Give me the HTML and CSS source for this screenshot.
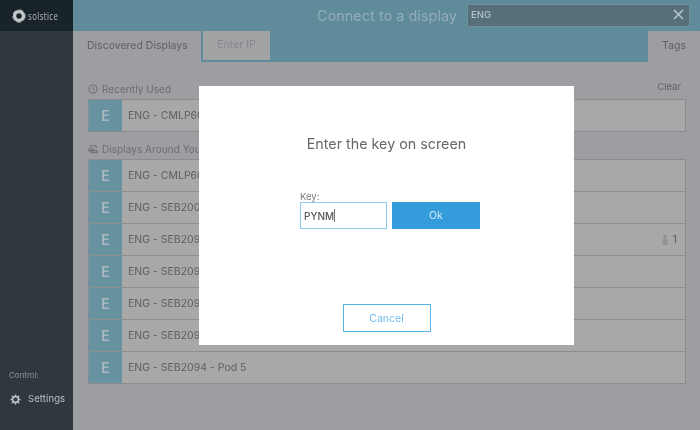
FILE: index.html
```html
<!DOCTYPE html>
<html lang="en">
<head>
<meta charset="utf-8">
<title>Solstice</title>
<link rel="stylesheet" href="styles.css">
</head>
<body>
<div class="app">
  <aside class="sidebar">
    <div class="brand">
      <svg class="brand-icon" width="14" height="14" viewBox="0 0 14 14"><circle cx="7" cy="7" r="4.400" fill="none" stroke="#c4c8c9" stroke-width="3.300"/><circle cx="7" cy="7" r="6.200" fill="none" stroke="#c4c8c9" stroke-width=".8" stroke-dasharray="5 2"/></svg>
      <span class="brand-name">solstice</span>
    </div>
    <div class="side-foot">
      <div class="control-label">Control:</div>
      <div class="settings">
        <svg width="11" height="11" viewBox="0 0 12 12"><circle cx="6" cy="6" r="3.200" fill="none" stroke="#b8bfc4" stroke-width="1.800"/><path d="M6 .5v2M6 9.500v2M.5 6h2M9.500 6h2M2.100 2.100l1.400 1.400M8.500 8.500l1.400 1.400M2.100 9.900l1.400-1.400M8.500 3.500l1.400-1.400" stroke="#b8bfc4" stroke-width="1.700"/></svg>
        <span>Settings</span>
      </div>
    </div>
  </aside>
  <main class="main">
    <header class="topbar">
      <div class="title-row">
        <h1 class="title">Connect to a display</h1>
        <div class="search"><span>ENG</span>
          <svg width="11" height="11" viewBox="0 0 11 11"><path d="M1 1l9 9M10 1l-9 9" stroke="#b4c2c8" stroke-width="1.700"/></svg>
        </div>
      </div>
      <div class="tabs">
        <div class="tab tab-active">Discovered Displays</div>
        <div class="tab tab-off">Enter IP</div>
        <div class="tab tab-tags">Tags</div>
      </div>
    </header>
    <section class="content">
      <div class="section-head head-recent">
        <svg width="10" height="10" viewBox="0 0 11 11"><circle cx="5.500" cy="5.500" r="4.500" fill="none" stroke="#66686b"/><path d="M5.500 2.800v2.900l2 .8" fill="none" stroke="#66686b"/></svg>
        <span class="head-text">Recently Used</span>
        <span class="clear">Clear</span>
      </div>
      <div class="list">
        <div class="row"><div class="badge">E</div><div class="name">ENG - CMLP6000</div></div>
      </div>
      <div class="section-head head-around">
        <svg width="10" height="10" viewBox="0 0 11 11"><path d="M2.500 4.500V2h6.500v2.500M.5 5.500h6v2h-6zM3 7.500h7.500v2H3z" fill="none" stroke="#66686b"/></svg>
        <span class="head-text">Displays Around You</span>
      </div>
      <div class="list">
        <div class="row"><div class="badge">E</div><div class="name">ENG - CMLP6000</div></div>
        <div class="row"><div class="badge">E</div><div class="name">ENG - SEB2000</div></div>
        <div class="row"><div class="badge">E</div><div class="name">ENG - SEB2094 - Pod 1</div>
          <div class="users"><svg width="8" height="11" viewBox="0 0 8 11"><circle cx="4" cy="2.200" r="2" fill="#929292"/><path d="M1.500 11V6.500Q1.500 4.500 4 4.500T6.500 6.500V11z" fill="#929292"/></svg><span>1</span></div>
        </div>
        <div class="row"><div class="badge">E</div><div class="name">ENG - SEB2094 - Pod 2</div></div>
        <div class="row"><div class="badge">E</div><div class="name">ENG - SEB2094 - Pod 3</div></div>
        <div class="row"><div class="badge">E</div><div class="name">ENG - SEB2094 - Pod 4</div></div>
        <div class="row"><div class="badge">E</div><div class="name">ENG - SEB2094 - Pod 5</div></div>
      </div>
    </section>
  </main>
  <div class="modal">
    <h2 class="modal-title">Enter the key on screen</h2>
    <div class="key-form">
      <div class="key-field">
        <label class="key-label" for="key">Key:</label>
        <div class="key-input" id="key">PYNM<i class="caret"></i></div>
      </div>
      <div class="ok">Ok</div>
    </div>
    <div class="cancel">Cancel</div>
  </div>
</div>
</body>
</html>
```
FILE: styles.css
```css
* { box-sizing: border-box; }
html, body { margin: 0; height: 100%; }
body { font-family: Inter, "Liberation Sans", sans-serif; overflow: hidden; }
.app { position: relative; display: flex; width: 700px; height: 430px; background: #9d9ea1; filter: blur(0.45px); }

.sidebar { width: 73px; flex: none; background: #30383f; display: flex; flex-direction: column; justify-content: space-between; }
.brand { height: 31px; background: #192429; display: flex; align-items: center; padding-left: 12px; gap: 2px; }
.brand-icon { flex: none; }
.brand-name { font-family: "Open Sans", sans-serif; font-size: 11.500px; letter-spacing: 0.6px; color: #b9bdbe; transform: scaleX(0.68); transform-origin: left center; }
.side-foot { padding: 0 0 25px 9px; }
.control-label { font-size: 8px; line-height: 10px; color: #8b949b; }
.settings { display: flex; align-items: center; gap: 7px; margin-top: 13px; padding-left: 1px; font-size: 9.500px; line-height: 12px; color: #b8c0c6; letter-spacing: 0.1px; }

.main { flex: 1; display: flex; flex-direction: column; min-width: 0; }
.topbar { height: 62px; background: #5f8b9b; display: flex; flex-direction: column; }
.title-row { height: 31px; display: flex; align-items: center; justify-content: flex-end; padding-right: 10px; gap: 10px; }
.title { margin: 0; font-size: 14.500px; font-weight: 400; color: #93adb7; }
.search { width: 223px; height: 23px; margin-top: -1px; background: #566f7a; border: 1px solid #6f919c; display: flex; align-items: center; justify-content: space-between; padding: 0 5px 2px 3px; font-size: 9.500px; font-weight: 500; color: #b4c4ca; }
.tabs { flex: 1; display: flex; align-items: flex-start; }
.tab { height: 31px; display: flex; align-items: center; font-size: 10.500px; }
.tab-active { width: 128px; background: #9d9ea1; color: #5f6063; padding-left: 14px; padding-bottom: 3px; }
.tab-off { width: 67px; height: 29px; margin-left: 2px; background: #a3a3a5; color: #84868a; justify-content: center; padding-bottom: 2px; }
.tab-tags { width: 52px; margin-left: auto; background: #9d9ea1; color: #5f6063; justify-content: center; padding-bottom: 3px; }

.content { flex: 1; padding: 0 14px 0 15px; }
.section-head { display: flex; align-items: center; gap: 4px; height: 14px; font-size: 10px; color: #6b6d70; }
.head-recent { margin-top: 20px; margin-bottom: 3px; }
.head-around { margin-top: 10px; margin-bottom: 3px; }
.head-text { letter-spacing: 0.05px; }
.clear { margin-left: auto; margin-top: -6px; margin-right: 5px; font-size: 9.500px; color: #606165; }
.list { border: 1px solid #8c8c8e; border-left-color: #7f8f96; background: #a8a8a8; }
.row { height: 32px; display: flex; align-items: center; border-bottom: 1px solid #8e8e8e; }
.row:last-child { border-bottom: 0; height: 31px; }
.badge { width: 33px; height: 100%; background: #66939f; color: #a9b9be; display: flex; align-items: center; justify-content: center; font-size: 14px; font-weight: 600; }
.name { padding-left: 6px; font-size: 10.500px; color: #5f5f60; }
.users { margin-left: auto; margin-right: 8px; display: flex; align-items: center; gap: 4px; font-size: 10.500px; color: #5c5c5c; }

.modal { position: absolute; left: 199px; top: 86px; width: 375px; height: 259px; background: #fff; display: flex; flex-direction: column; align-items: center; }
.modal-title { margin: 49px 0 0; font-size: 14.300px; line-height: 18px; font-weight: 400; color: #66686c; }
.key-form { display: flex; align-items: flex-end; gap: 5px; margin-top: 38px; margin-left: 7px; }
.key-label { display: block; font-size: 9.500px; line-height: 11px; color: #76787b; }
.key-input { width: 87px; height: 27px; border: 1px solid #8ecbee; padding-left: 3px; display: flex; align-items: center; font-size: 10px; font-weight: 500; color: #55575a; }
.caret { display: block; width: 1px; height: 13px; background: #77797c; }
.ok { width: 88px; height: 27px; background: #349cdb; color: #cfe8f7; display: flex; align-items: center; justify-content: center; font-size: 10.500px; }
.cancel { margin-top: 75px; width: 88px; height: 28px; border: 1px solid #57b3e6; color: #73bdea; display: flex; align-items: center; justify-content: center; font-size: 10.500px; }
```
